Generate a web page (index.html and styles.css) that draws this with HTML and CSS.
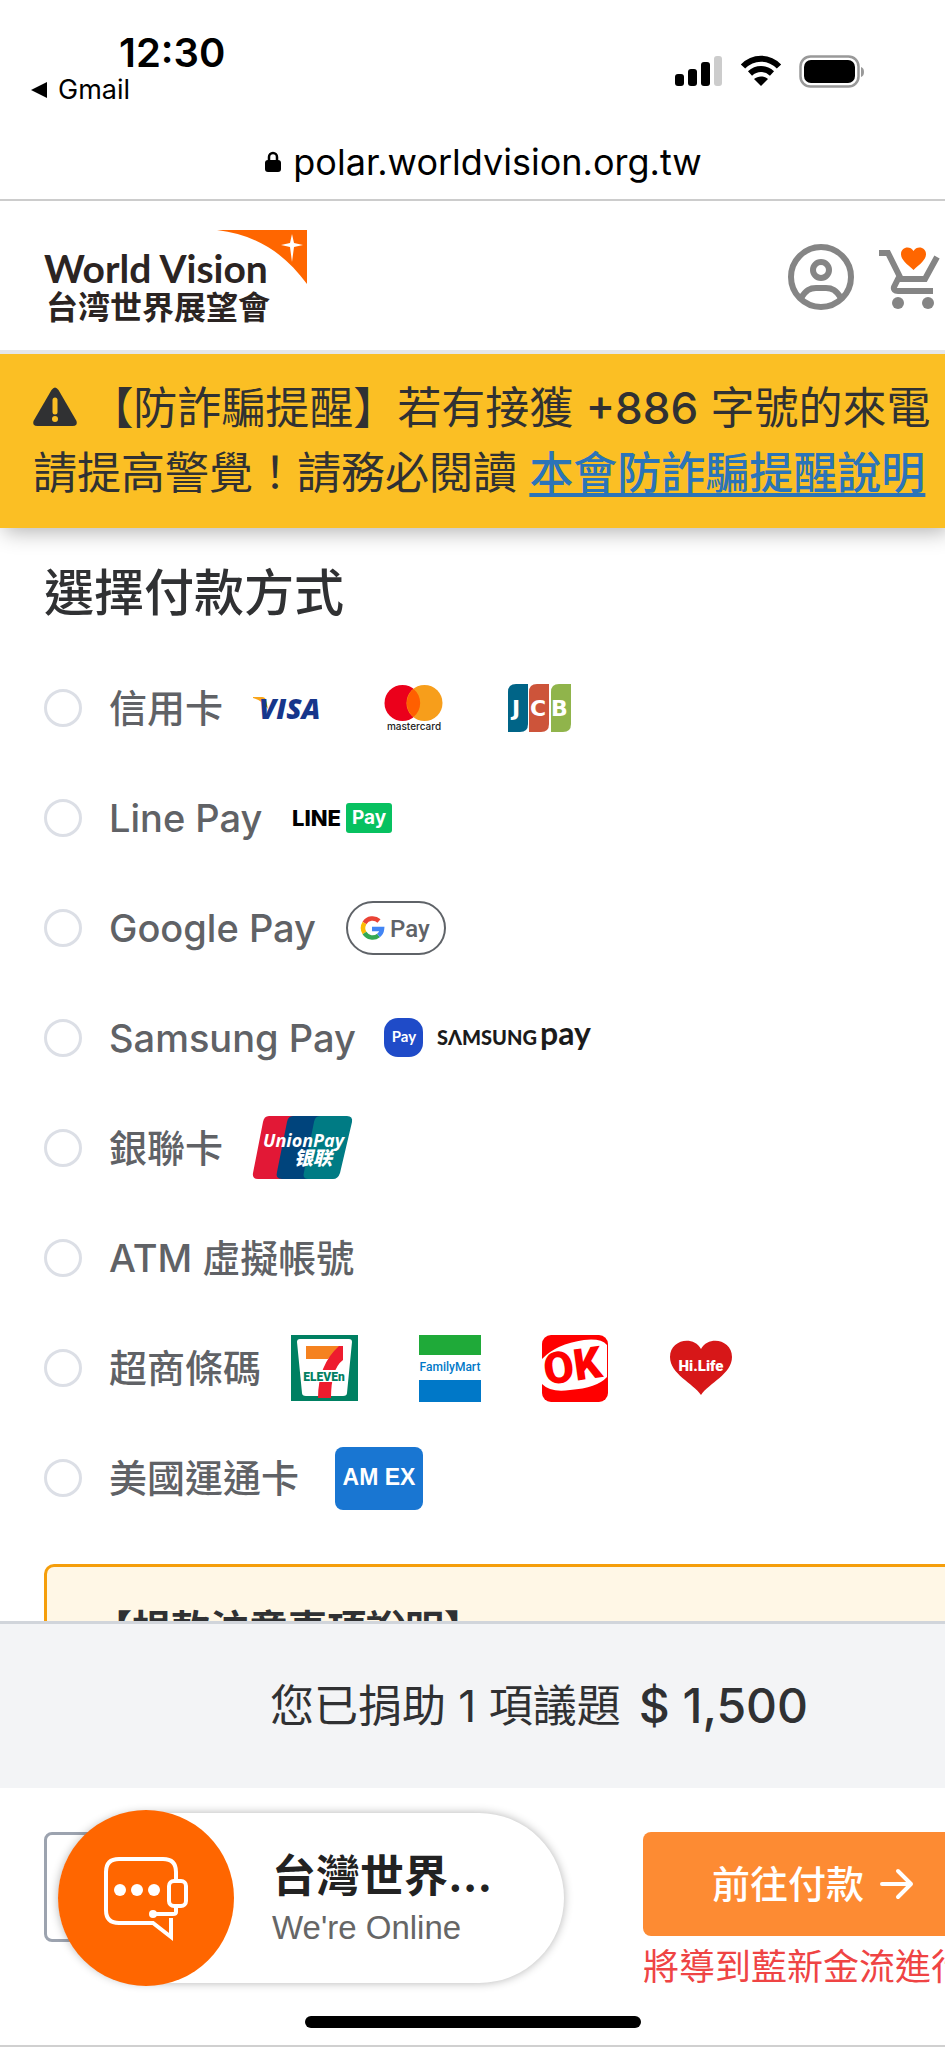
FILE: index.html
```html
<!DOCTYPE html>
<html lang="zh-Hant">
<head>
<meta charset="utf-8">
<meta name="viewport" content="width=device-width, initial-scale=1">
<title>選擇付款方式</title>
<link rel="stylesheet" href="styles.css">
</head>
<body>
<div class="page">
  <div class="status">
    <div class="status-left">
      <div class="clock">12:30</div>
      <a class="back" href="#"><svg width="18" height="18" viewBox="0 0 18 18"><path d="M17 1v16L1 9z"/></svg>Gmail</a>
    </div>
    <div class="status-icons">
      <svg width="48" height="32" viewBox="0 0 48 32"><rect y="19" width="9" height="12" rx="3"/><rect x="13" y="14" width="9" height="17" rx="3"/><rect x="26" y="7" width="9" height="24" rx="3"/><rect x="39" y="1" width="8" height="30" rx="3" fill="#ccc"/></svg>
      <svg width="42" height="32" viewBox="0 0 42 32"><g fill="none" stroke="#000" stroke-width="6"><path d="M3 11.500C13 1 29 1 39 11.500"/><path d="M10 18.500c6.500-6 15.500-6 22 0"/></g><path d="M21 31l-7-7c4-3.500 10-3.500 14 0z"/></svg>
      <svg width="66" height="34" viewBox="0 0 66 34"><rect x="1.500" y="1.500" width="58" height="30" rx="10" fill="none" stroke="#999" stroke-width="2.500"/><rect x="5" y="5" width="51" height="23" rx="7"/><path d="M62 12c4 1 4 9 0 10z" fill="#999"/></svg>
    </div>
  </div>
  <div class="address">
    <svg width="16" height="22" viewBox="0 0 16 22"><rect y="9" width="16" height="12" rx="3"/><path d="M4 10V6a4 4 0 018 0v4" fill="none" stroke="#000" stroke-width="2.500"/></svg>
    <span>polar.worldvision.org.tw</span>
  </div>

  <header class="header">
    <a class="brand" href="#" aria-label="World Vision">
      <svg width="264" height="94" viewBox="0 0 264 94">
        <path d="M173 0h90v54C240 23 213 5 173 0z" fill="#f60"/>
        <path d="M248 4l2 9 9 2-9 2-2 15-2-15-9-2 9-2z" fill="#fff"/>
        <text class="brand-en" x="0" y="53">World Vision</text>
        <text class="brand-zh" x="2" y="89">台湾世界展望會</text>
      </svg>
    </a>
    <nav class="header-tools">
      <a href="#" aria-label="會員"><svg width="66" height="66" viewBox="0 0 66 66" fill="none" stroke="#858585" stroke-width="6"><circle cx="33" cy="33" r="30"/><circle cx="33" cy="26" r="8"/><path d="M13 54c5-8 9-10 15-10h10c6 0 10 2 15 10"/></svg></a>
      <a href="#" aria-label="購物車"><svg width="62" height="62" viewBox="0 0 62 62"><path d="M1 7h9l13 26h24L59 11M21 31l-5 10q-1 4 4 4h35" fill="none" stroke="#858585" stroke-width="6"/><circle cx="20" cy="57" r="6" fill="#858585"/><circle cx="50" cy="57" r="6" fill="#858585"/><path d="M35.500 24C29 18 23 14 23 8c0-7 9-9 12.500-3C39 -1 48 1 48 8c0 6-6 10-12.500 16z" fill="#f60"/></svg></a>
    </nav>
  </header>

  <div class="alert">
    <svg class="alert-icon" width="44" height="40" viewBox="0 0 44 40"><path d="M18.500 3q3.500-5 7 0l18 31q1.500 5-4 5h-35q-5.500 0-4-5z" fill="#303133"/><path d="M22 13v12" stroke="#fbbf24" stroke-width="5" stroke-linecap="round"/><circle cx="22" cy="32" r="3" fill="#fbbf24"/></svg>
    【防詐騙提醒】若有接獲 <b>+886</b> 字號的來電<br>請提高警覺！請務必閱讀 <a href="#">本會防詐騙提醒說明</a>
  </div>

  <main class="content">
    <h1 class="title">選擇付款方式</h1>
    <form class="methods">
      <label class="method"><input type="radio" name="pay"><span>信用卡</span>
        <span class="logos">
          <svg width="67" height="24" viewBox="0 0 67 24"><path d="M0 1h9q3 0 4 3l2 9Q10 5 0 2z" fill="#f9a51a"/><text class="visa" x="6" y="23">VISA</text></svg>
          <svg width="60" height="48" viewBox="0 0 60 48"><circle cx="18.500" cy="19" r="18" fill="#eb001b"/><circle cx="40.500" cy="19" r="18" fill="#f79e1b"/><path d="M29.500 5a18 18 0 010 28 18 18 0 010-28z" fill="#ff5f00"/><text class="mc" x="30" y="46">mastercard</text></svg>
          <svg width="63" height="48" viewBox="0 0 63 48"><path d="M8 0h12v40q0 8-8 8H0V8q0-8 8-8z" fill="#006487"/><path d="M29 0h12v40q0 8-8 8H21V8q0-8 8-8z" fill="#cd543a"/><path d="M51 0h12v40q0 8-8 8H43V8q0-8 8-8z" fill="#90b44b"/><text class="jcb" y="32"><tspan x="4">J</tspan><tspan x="22">C</tspan><tspan x="43">B</tspan></text></svg>
        </span></label>
      <label class="method"><input type="radio" name="pay"><span>Line Pay</span>
        <span class="logos"><svg width="100" height="30" viewBox="0 0 100 30"><text class="line" x="0" y="23">LINE</text><rect x="54" width="46" height="30" rx="3" fill="#07c160"/><text class="line-pay" x="77" y="21">Pay</text></svg></span></label>
      <label class="method"><input type="radio" name="pay"><span>Google Pay</span>
        <span class="logos"><svg width="100" height="54" viewBox="0 0 100 54"><rect x="1" y="1" width="98" height="52" rx="26" fill="#fff" stroke="#5f6368" stroke-width="2"/><g fill="none" stroke-width="4.500"><path d="M33 20a9.500 9.500 0 00-14.500 2" stroke="#ea4335"/><path d="M18.500 22a9.500 9.500 0 000 10" stroke="#fbbc04"/><path d="M18.500 32a9.500 9.500 0 0014 2.500" stroke="#34a853"/><path d="M32.500 34.500a9.500 9.500 0 003.500-6.500H26" stroke="#4285f4"/></g><text class="gpay" x="44" y="36">Pay</text></svg></span></label>
      <label class="method"><input type="radio" name="pay"><span>Samsung Pay</span>
        <span class="logos logos-samsung"><svg width="212" height="40" viewBox="0 0 212 40"><rect width="39" height="39" rx="14" fill="#1f4bc8"/><text class="spay" x="20" y="24">Pay</text><text class="samsung" x="53" y="27">SΛMSUNG</text><text class="samsung-pay" x="156" y="27">pay</text></svg></span></label>
      <label class="method"><input type="radio" name="pay"><span>銀聯卡</span>
        <span class="logos"><svg width="100" height="64" viewBox="0 0 100 64"><path d="M16 0h30L34 63H5q-6 0-5-6L10 6q1-6 6-6z" fill="#e21836"/><path d="M40 0h34L60 63H29q-7 0-5-7L34 6q1-6 6-6z" fill="#00447c"/><path d="M67 0h27q6 0 5 6L87 57q-2 6-7 6H55q-6 0-4-7L61 6q1-6 6-6z" fill="#007b84"/><text class="up-en" x="10" y="31">UnionPay</text><text class="up-zh" x="41" y="49">银联</text></svg></span></label>
      <label class="method"><input type="radio" name="pay"><span>ATM 虛擬帳號</span></label>
      <label class="method"><input type="radio" name="pay"><span>超商條碼</span>
        <span class="logos logos-stores">
          <svg width="67" height="66" viewBox="0 0 67 66"><rect width="67" height="66" fill="#008062"/><path d="M9 4h49q3 0 3 3l-5 51q0 3-4 3H15q-4 0-4-3L6 7q0-3 3-3z" fill="#fff"/><path d="M15 11h37L37 24H15z" fill="#f58220"/><path d="M52 11v14Q40 34 40 63H27Q27 30 48 11z" fill="#ee1c2e"/><rect x="11" y="35" width="45" height="12" fill="#fff"/><text class="eleven" x="33" y="46">ELEVEn</text></svg>
          <svg width="62" height="67" viewBox="0 0 62 67"><rect width="62" height="20" fill="#1faa39"/><rect y="45" width="62" height="22" fill="#0078c8"/><text class="family" x="31" y="36">FamilyMart</text></svg>
          <svg width="66" height="67" viewBox="0 0 66 67"><rect width="66" height="67" rx="9" fill="#f00"/><path d="M0 24Q14 9 42 5q17-2 23 5v32Q55 53 28 55 9 58 0 49z" fill="#fff"/><text class="ok" x="31" y="46" transform="rotate(-8 31 34)">OK</text></svg>
          <svg width="64" height="56" viewBox="0 0 64 56"><path d="M32 55C24 43 1 34 1 17 1 0 24-5 32 9 40-5 63 0 63 17 63 34 40 43 32 55z" fill="#d71718"/><text class="hilife" x="32" y="31">Hi.Life</text></svg>
        </span></label>
      <label class="method"><input type="radio" name="pay"><span>美國運通卡</span>
        <span class="logos logos-amex"><svg width="88" height="63" viewBox="0 0 88 63"><rect width="88" height="63" rx="8" fill="#1976d2"/><text class="amex" x="44" y="38">AM EX</text></svg></span></label>
    </form>
    <section class="notice"><h2>【捐款注意事項說明】</h2></section>
  </main>

  <footer class="footer">
    <div class="summary"><span>您已捐助 1 項議題</span><strong>$ 1,500</strong></div>
    <div class="actions">
      <button class="prev" type="button" aria-label="上一步"></button>
      <div class="checkout">
        <button class="next" type="button">前往付款<svg width="34" height="34" viewBox="0 0 34 34" fill="none" stroke="#fff" stroke-width="4" stroke-linecap="round" stroke-linejoin="round"><path d="M2 17h29M18 4l13 13-13 13"/></svg></button>
        <p>將導到藍新金流進行</p>
      </div>
      <button class="chat" type="button">
        <span class="chat-icon"><svg width="86" height="84" viewBox="0 0 86 84" fill="none" stroke="#fff" stroke-width="4"><path d="M73 24V16Q73 3 60 3H16Q3 3 3 16v38q0 13 13 13h34l18 14V62"/><rect x="66" y="25" width="17" height="25" rx="5"/><path d="M73 51v5q0 2-3 2H48"/><g fill="#fff" stroke="none"><circle cx="17" cy="34" r="6"/><circle cx="34" cy="34" r="6"/><circle cx="51" cy="34" r="6"/><circle cx="50" cy="58" r="4"/></g></svg></span>
        <span class="chat-text"><b>台灣世界...</b><small>We're Online</small></span>
      </button>
      <div class="home-bar"></div>
    </div>
  </footer>
</div>
</body>
</html>
```

FILE: styles.css
```css
* { box-sizing: border-box; }

body {
  margin: 0;
  background: #fff;
  color: #303133;
  font-family: Inter, "Noto Sans CJK TC", sans-serif;
}

svg { display: block; flex: none; overflow: visible; }
a { color: inherit; }
button { font: inherit; border: 0; padding: 0; cursor: pointer; }

.page {
  display: flex;
  flex-direction: column;
  height: 100vh;
  overflow: hidden;
  border-bottom: 2px solid #d0d0d0;
}

.status {
  display: flex;
  justify-content: space-between;
  align-items: flex-start;
  padding: 28px 80px 0 30px;
  color: #000;
}
.clock { padding-left: 89px; font-size: 40px; line-height: 50px; font-weight: 600; }
.back { display: flex; align-items: center; gap: 10px; font-size: 27px; line-height: 24px; text-decoration: none; }
.status-icons { display: flex; gap: 17px; padding-top: 27px; }

.address {
  display: flex;
  justify-content: center;
  align-items: center;
  gap: 12px;
  padding: 36px 0 13px 22px;
  border-bottom: 2px solid #ccc;
  color: #000;
  font-size: 36px;
  line-height: 48px;
}

.header {
  position: relative;
  z-index: 1;
  display: flex;
  justify-content: space-between;
  align-items: center;
  height: 153px;
  padding: 2px 5px 0 44px;
  border-bottom: 4px solid #e5e7eb;
  background: #fff;
}
.brand-en { font: 700 39px Lato, sans-serif; fill: #2b2422; }
.brand-zh { font: 700 32px "Noto Sans CJK TC", sans-serif; fill: #2b2422; }
.header-tools { display: flex; align-items: center; gap: 24px; }

.alert {
  position: relative;
  padding: 22px 0 22px 33px;
  background: #fbbf24;
  box-shadow: 4px 4px 20px rgba(0, 0, 0, 0.3);
  font-size: 44px;
  line-height: 65px;
  white-space: nowrap;
}
.alert-icon { display: inline-block; vertical-align: -3px; }
.alert b { font-weight: 500; }
.alert a { color: #2b74b8; font-weight: 500; text-underline-offset: 4px; }

.content { flex: 1; min-height: 0; overflow: hidden; padding: 33px 0 0 44px; }
.title { margin: 0 0 28px; font-size: 50px; line-height: 64px; font-weight: 500; }

.method {
  display: flex;
  align-items: center;
  height: 110px;
  color: #606266;
  font-size: 38px;
  line-height: 48px;
  font-weight: 500;
}
.method input {
  appearance: none;
  width: 38px;
  height: 38px;
  margin: 0 27px 0 0;
  border: 3px solid #dcdfe6;
  border-radius: 50%;
}
.logos { display: flex; align-items: center; gap: 64px; margin-left: 30px; }
.logos-samsung { margin-left: 28px; }
.logos-stores { gap: 61px; }
.logos-amex { margin-left: 36px; }

.visa { font: italic 800 28px "Open Sans", sans-serif; fill: #16368b; }
.mc { font: 500 10px Inter, sans-serif; fill: #222; text-anchor: middle; }
.jcb { font: 700 22px "DejaVu Sans", sans-serif; fill: #fff; }
.line { font: 800 22px Inter, sans-serif; fill: #000; }
.line-pay { font: 700 19px Inter, sans-serif; fill: #fff; text-anchor: middle; }
.gpay { font: 500 24px Roboto, sans-serif; fill: #5f6368; }
.spay { font: 700 15px Lato, sans-serif; fill: #fff; text-anchor: middle; }
.samsung { font: 900 20px Lato, sans-serif; fill: #1b1b1b; }
.samsung-pay { font: 700 32px Lato, sans-serif; fill: #1b1b1b; }
.up-en { font: italic 700 18px "Open Sans", sans-serif; fill: #fff; }
.up-zh { font: italic 900 19px "Noto Sans CJK SC", sans-serif; fill: #fff; }
.eleven { font: 900 12px Roboto, sans-serif; fill: #008062; text-anchor: middle; }
.family { font: 500 12px Roboto, sans-serif; fill: #0078c8; text-anchor: middle; }
.ok { font: 900 44px Roboto, sans-serif; fill: #f00; text-anchor: middle; }
.hilife { font: 900 15px Roboto, sans-serif; fill: #fff; text-anchor: middle; }
.amex { font: 700 23px "Liberation Sans", sans-serif; fill: #fff; text-anchor: middle; }

.notice {
  margin-top: 31px;
  padding: 30px 46px;
  border: 3px solid #f59e0b;
  border-right: 0;
  border-radius: 10px 0 0 10px;
  background: #fff7e6;
}
.notice h2 { margin: 0; font-size: 39px; line-height: 64px; font-weight: 700; }

.summary {
  display: flex;
  align-items: center;
  gap: 18px;
  height: 167px;
  padding-left: 270px;
  border-top: 3px solid #d1d5db;
  background: #f3f4f6;
  font-size: 44px;
  line-height: 60px;
}
.summary strong { font-size: 48px; font-weight: 500; }

.actions {
  position: relative;
  display: grid;
  grid-template-columns: 1fr 302px;
  align-items: start;
  padding: 44px 0 17px 44px;
}
.prev { width: 240px; height: 110px; border: 3px solid #9ca3af; border-radius: 8px; background: #fff; }
.checkout { overflow: hidden; }
.next {
  display: flex;
  align-items: center;
  gap: 16px;
  width: 100%;
  height: 104px;
  padding-left: 69px;
  border-radius: 8px 0 0 8px;
  background: #fd8b33;
  color: #fff;
  font-size: 38px;
  line-height: 48px;
  font-weight: 500;
}
.checkout p { margin: 6px 0 0; color: #ef4444; font-size: 36px; line-height: 50px; white-space: nowrap; }

.chat {
  position: absolute;
  left: 58px;
  top: 25px;
  display: flex;
  align-items: center;
  gap: 38px;
  width: 506px;
  height: 170px;
  border-radius: 85px;
  background: #fff;
  box-shadow: 0 0 10px rgba(0, 0, 0, 0.3);
  text-align: left;
}
.chat-icon {
  display: grid;
  place-items: center;
  flex: none;
  width: 176px;
  height: 176px;
  border-radius: 50%;
  background: #f60;
}
.chat-text { display: flex; flex-direction: column; color: #222; }
.chat-text b { font-size: 44px; line-height: 60px; font-weight: 700; }
.chat-text small { color: #666; font: 33px/44px "Liberation Sans", sans-serif; }

.home-bar {
  grid-column: 1 / -1;
  justify-self: center;
  width: 336px;
  height: 12px;
  margin: 24px 44px 0 0;
  border-radius: 6px;
  background: #000;
}
```
